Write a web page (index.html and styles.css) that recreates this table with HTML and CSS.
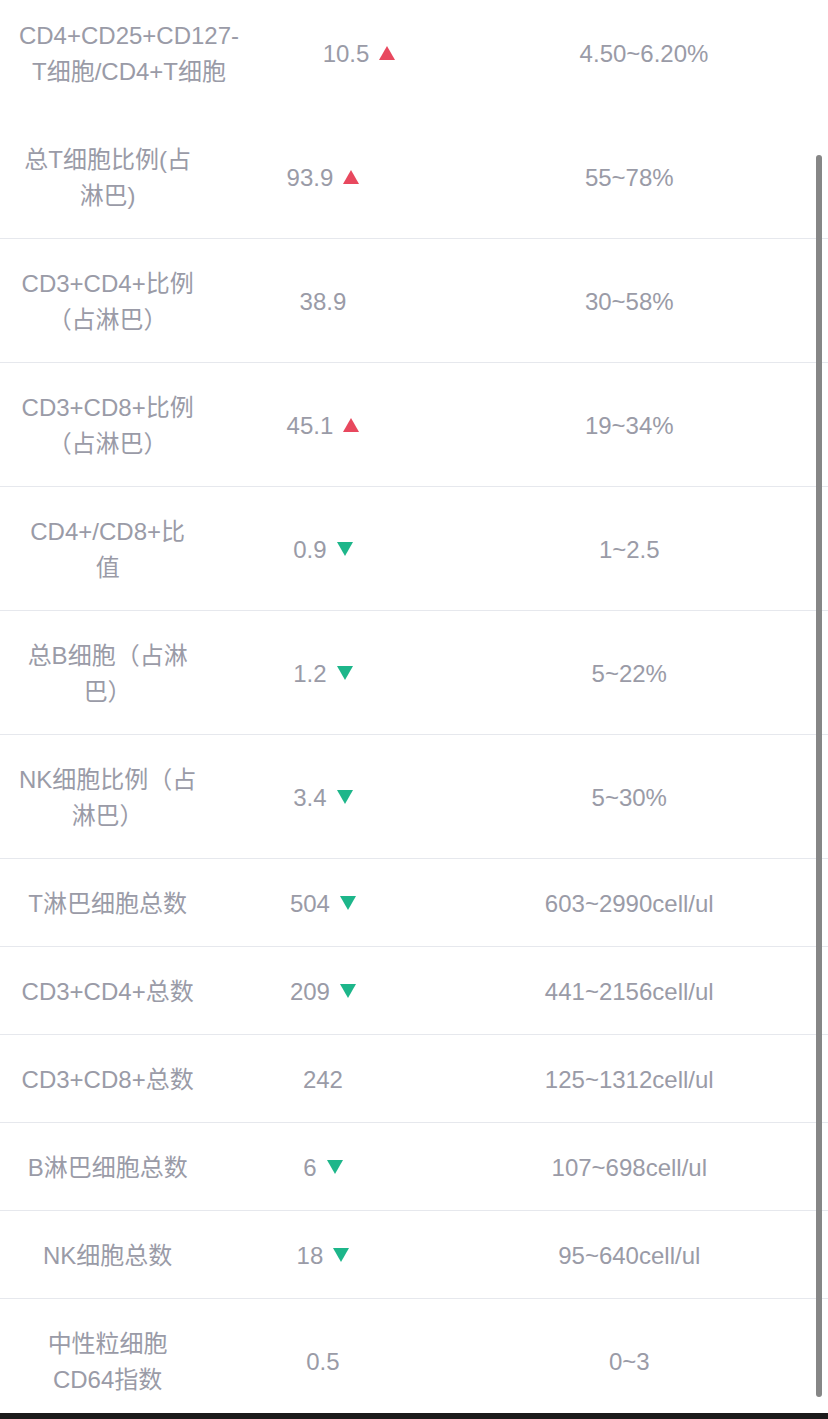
FILE: index.html
```html
<!DOCTYPE html>
<html lang="zh-CN">
<head>
<meta charset="utf-8">
<title>淋巴细胞亚群</title>
<link rel="stylesheet" href="styles.css">
</head>
<body>
<div class="list">
  <div class="row row-top">
    <div class="c name">CD4+CD25+CD127-<br>T细胞/CD4+T细胞</div>
    <div class="c val">10.5<i class="up"></i></div>
    <div class="c ref">4.50~6.20%</div>
  </div>
  <div class="row">
    <div class="c name">总T细胞比例(占<br>淋巴)</div>
    <div class="c val">93.9<i class="up"></i></div>
    <div class="c ref">55~78%</div>
  </div>
  <div class="row">
    <div class="c name">CD3+CD4+比例<br>（占淋巴）</div>
    <div class="c val">38.9</div>
    <div class="c ref">30~58%</div>
  </div>
  <div class="row">
    <div class="c name">CD3+CD8+比例<br>（占淋巴）</div>
    <div class="c val">45.1<i class="up"></i></div>
    <div class="c ref">19~34%</div>
  </div>
  <div class="row">
    <div class="c name">CD4+/CD8+比<br>值</div>
    <div class="c val">0.9<i class="down"></i></div>
    <div class="c ref">1~2.5</div>
  </div>
  <div class="row">
    <div class="c name">总B细胞（占淋<br>巴）</div>
    <div class="c val">1.2<i class="down"></i></div>
    <div class="c ref">5~22%</div>
  </div>
  <div class="row">
    <div class="c name">NK细胞比例（占<br>淋巴）</div>
    <div class="c val">3.4<i class="down"></i></div>
    <div class="c ref">5~30%</div>
  </div>
  <div class="row">
    <div class="c name">T淋巴细胞总数</div>
    <div class="c val">504<i class="down"></i></div>
    <div class="c ref">603~2990cell/ul</div>
  </div>
  <div class="row">
    <div class="c name">CD3+CD4+总数</div>
    <div class="c val">209<i class="down"></i></div>
    <div class="c ref">441~2156cell/ul</div>
  </div>
  <div class="row">
    <div class="c name">CD3+CD8+总数</div>
    <div class="c val">242</div>
    <div class="c ref">125~1312cell/ul</div>
  </div>
  <div class="row">
    <div class="c name">B淋巴细胞总数</div>
    <div class="c val">6<i class="down"></i></div>
    <div class="c ref">107~698cell/ul</div>
  </div>
  <div class="row">
    <div class="c name">NK细胞总数</div>
    <div class="c val">18<i class="down"></i></div>
    <div class="c ref">95~640cell/ul</div>
  </div>
  <div class="row">
    <div class="c name">中性粒细胞<br>CD64指数</div>
    <div class="c val">0.5</div>
    <div class="c ref">0~3</div>
  </div>
</div>
<div class="scrollbar"></div>
<div class="homebar"></div>
</body>
</html>
```
FILE: styles.css
```css
html, body {
  margin: 0;
  padding: 0;
  background: #ffffff;
  overflow: hidden;
  height: 1419px;
}
body {
  font-family: "Liberation Sans", "Noto Sans CJK SC", sans-serif;
  font-size: 24px;
  color: #9a9ba7;
}
.list {
  display: flex;
  flex-direction: column;
}
.row {
  display: grid;
  grid-template-columns: 26% 26% 1fr;
  align-items: center;
  padding: 27px 0 24px;
  border-bottom: 1px solid #e6e8ed;
  line-height: 36px;
}
.row-top {
  grid-template-columns: 258px 202px 1fr;
  padding: 18px 0 25px;
  border-bottom: none;
}
.c {
  text-align: center;
}
.val {
  display: flex;
  justify-content: center;
  align-items: center;
  gap: 10px;
}
.up, .down {
  display: block;
  width: 0;
  height: 0;
  border-left: 8px solid transparent;
  border-right: 8px solid transparent;
  margin-bottom: 3px;
}
.up {
  border-bottom: 14px solid #e8485e;
}
.down {
  border-top: 14px solid #1db68a;
}
.scrollbar {
  position: fixed;
  right: 6px;
  top: 155px;
  width: 6px;
  height: 1242px;
  border-radius: 3px;
  background: #868686;
}
.homebar {
  position: fixed;
  left: 0;
  right: 0;
  bottom: 0;
  height: 6px;
  background: #1b1b1b;
}
```
